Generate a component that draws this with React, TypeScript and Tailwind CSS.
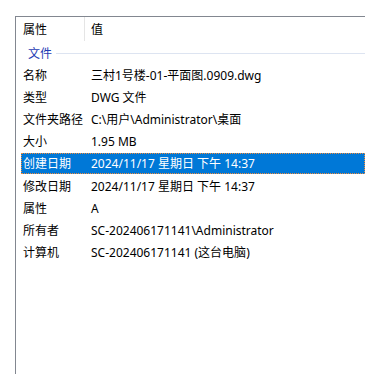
import React from "react";

const rows: { label: string; value: string; selected?: boolean }[] = [
    { label: "名称", value: "三村1号楼-01-平面图.0909.dwg" },
    { label: "类型", value: "DWG 文件" },
    { label: "文件夹路径", value: "C:\\用户\\Administrator\\桌面" },
    { label: "大小", value: "1.95 MB" },
    { label: "创建日期", value: "2024/11/17 星期日 下午 14:37", selected: true },
    { label: "修改日期", value: "2024/11/17 星期日 下午 14:37" },
    { label: "属性", value: "A" },
    { label: "所有者", value: "SC-202406171141\\Administrator" },
    { label: "计算机", value: "SC-202406171141 (这台电脑)" },
];

const App = () => {
    return (
        <div
            className="w-[365px] h-[374px] bg-white overflow-hidden pt-[16px] pl-[15px] text-[12px] text-black"
            style={{ fontFamily: '"Noto Sans", "Noto Sans CJK SC", sans-serif' }}
        >
            <div className="h-[358px] border-l border-t border-[#828790]">
                {/* header */}
                <div className="h-[24px] flex items-center">
                    <div className="w-[69px] h-full flex items-center pl-[7px] pt-[1px] border-r border-[#e5e5e5]">
                        属性
                    </div>
                    <div className="pl-[6px] pt-[1px]">值</div>
                </div>

                {/* group */}
                <div className="h-[23px] flex items-center pl-[12px] pt-[2px]">
                    <span className="text-[#1e3cb4]">文件</span>
                    <div className="flex-1 h-px bg-[#dde4f1] ml-[4px] -mt-[1px]" />
                </div>

                {/* properties */}
                {rows.map((r) => (
                    <div key={r.label} className="h-[22px]">
                        {r.selected ? (
                            <div className="mt-[1px] ml-[5px] h-[21px] flex items-center pt-[1px] bg-[#0078d7] text-white border border-dotted border-[#f08c3c]">
                                <div className="w-[63px] pl-[1px]">{r.label}</div>
                                <div className="pl-[6px] whitespace-nowrap">{r.value}</div>
                            </div>
                        ) : (
                            <div className="h-full flex items-center pt-[2px]">
                                <div className="w-[69px] pl-[7px]">{r.label}</div>
                                <div className="pl-[6px] whitespace-nowrap">{r.value}</div>
                            </div>
                        )}
                    </div>
                ))}
            </div>
        </div>
    );
};

export default App;
